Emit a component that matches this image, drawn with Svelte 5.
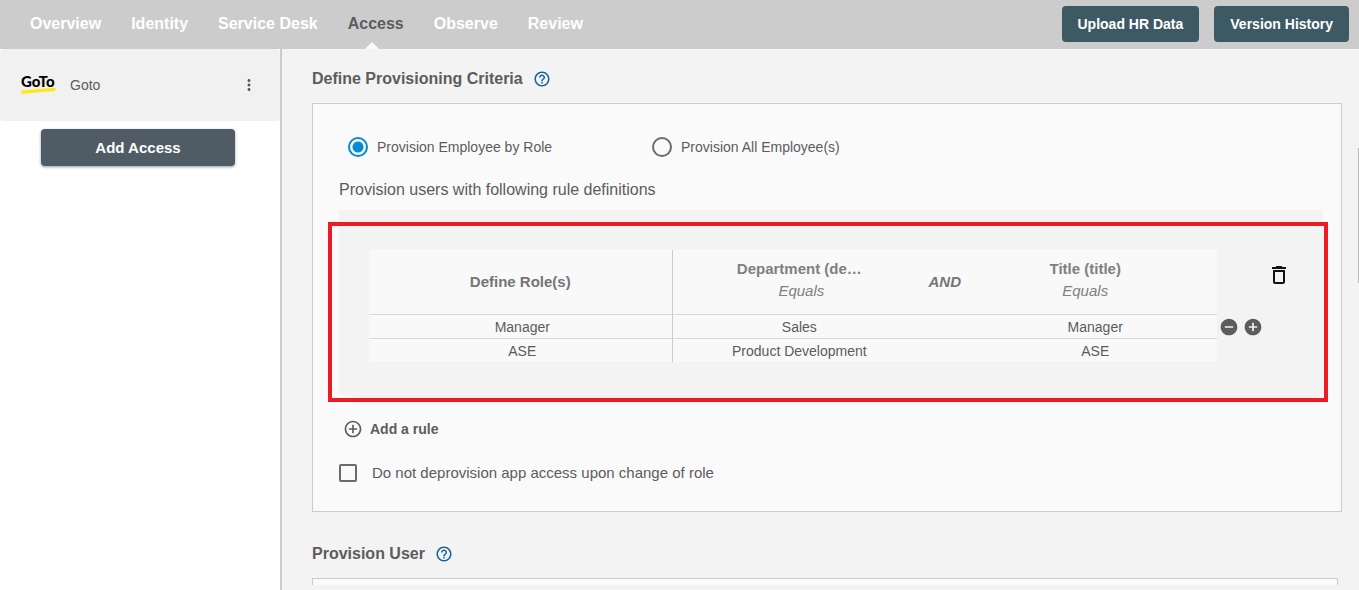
<script lang="ts">
  interface Rule {
    role: string;
    department: string;
    title: string;
  }

  const tabs = ['Overview', 'Identity', 'Service Desk', 'Access', 'Observe', 'Review'];

  let activeTab = $state('Access');
  let provisionMode = $state('role');
  let keepAccess = $state(false);

  const rules: Rule[] = [
    { role: 'Manager', department: 'Sales', title: 'Manager' },
    { role: 'ASE', department: 'Product Development', title: 'ASE' },
  ];
</script>

{#snippet helpIcon()}
  <button class="icon-btn help" aria-label="Help">
    <svg width="18" height="18" viewBox="0 0 24 24" fill="currentColor">
      <path
        d="M11 18h2v-2h-2v2zm1-16C6.48 2 2 6.48 2 12s4.48 10 10 10 10-4.48 10-10S17.52 2 12 2zm0 18c-4.41 0-8-3.59-8-8s3.59-8 8-8 8 3.59 8 8-3.59 8-8 8zm0-14c-2.21 0-4 1.79-4 4h2c0-1.1.9-2 2-2s2 .9 2 2c0 2-3 1.75-3 5h2c0-2.25 3-2.5 3-5 0-2.21-1.79-4-4-4z"
      />
    </svg>
  </button>
{/snippet}

<div class="app">
  <header>
    <nav>
      {#each tabs as tab (tab)}
        <a
          href="#{tab.toLowerCase().replace(' ', '-')}"
          class:active={tab === activeTab}
          onclick={() => (activeTab = tab)}>{tab}</a
        >
      {/each}
    </nav>
    <div class="header-actions">
      <button class="header-btn">Upload HR Data</button>
      <button class="header-btn">Version History</button>
    </div>
  </header>

  <div class="body">
    <aside>
      <div class="app-item">
        <svg class="logo" width="38" height="30" viewBox="0 0 38 30" aria-hidden="true">
          <text x="0" y="17">GoTo</text>
          <path d="M0.5 20.6 L34.5 17.8 V21 Q17 22 0.5 24 Z" fill="#ffe715" />
        </svg>
        <span class="app-name">Goto</span>
        <button class="icon-btn" aria-label="More options">
          <svg width="18" height="18" viewBox="0 0 24 24" fill="currentColor">
            <path
              d="M12 8c1.1 0 2-.9 2-2s-.9-2-2-2-2 .9-2 2 .9 2 2 2zm0 2c-1.1 0-2 .9-2 2s.9 2 2 2 2-.9 2-2-.9-2-2-2zm0 6c-1.1 0-2 .9-2 2s.9 2 2 2 2-.9 2-2-.9-2-2-2z"
            />
          </svg>
        </button>
      </div>
      <button class="add-access">Add Access</button>
    </aside>

    <main>
      <section>
        <div class="section-head">
          <h2>Define Provisioning Criteria</h2>
          {@render helpIcon()}
        </div>

        <div class="card">
          <div class="modes">
            <label>
              <input type="radio" name="mode" value="role" bind:group={provisionMode} />
              Provision Employee by Role
            </label>
            <label>
              <input type="radio" name="mode" value="all" bind:group={provisionMode} />
              Provision All Employee(s)
            </label>
          </div>

          <p class="intro">Provision users with following rule definitions</p>

          <div class="rule-panel">
            <table>
              <colgroup>
                <col class="col-role" />
                <col class="col-value" />
                <col class="col-op" />
                <col class="col-value" />
              </colgroup>
              <thead>
                <tr>
                  <th>Define Role(s)</th>
                  <th class="attr">Department (de…<em>Equals</em></th>
                  <th class="op">AND</th>
                  <th class="attr last">Title (title)<em>Equals</em></th>
                </tr>
              </thead>
              <tbody>
                {#each rules as rule}
                  <tr>
                    <td>{rule.role}</td>
                    <td>{rule.department}</td>
                    <td></td>
                    <td class="last">{rule.title}</td>
                  </tr>
                {/each}
              </tbody>
            </table>

            <div class="rule-actions">
              <button class="icon-btn delete" aria-label="Delete rule">
                <svg width="24" height="24" viewBox="0 0 24 24" fill="currentColor">
                  <path
                    d="M6 19c0 1.1.9 2 2 2h8c1.1 0 2-.9 2-2V7H6v12zM8 9h8v10H8V9zm7.5-5l-1-1h-5l-1 1H5v2h14V4z"
                  />
                </svg>
              </button>
              <div class="row-actions">
                <button class="icon-btn" aria-label="Remove row">
                  <svg width="20" height="20" viewBox="0 0 24 24" fill="currentColor">
                    <path
                      d="M12 2C6.48 2 2 6.48 2 12s4.48 10 10 10 10-4.48 10-10S17.52 2 12 2zm5 11H7v-2h10v2z"
                    />
                  </svg>
                </button>
                <button class="icon-btn" aria-label="Add row">
                  <svg width="20" height="20" viewBox="0 0 24 24" fill="currentColor">
                    <path
                      d="M12 2C6.48 2 2 6.48 2 12s4.48 10 10 10 10-4.48 10-10S17.52 2 12 2zm5 11h-4v4h-2v-4H7v-2h4V7h2v4h4v2z"
                    />
                  </svg>
                </button>
              </div>
            </div>

            <div class="highlight"></div>
          </div>

          <button class="add-rule">
            <svg width="20" height="20" viewBox="0 0 24 24" fill="currentColor">
              <path
                d="M13 7h-2v4H7v2h4v4h2v-4h4v-2h-4V7zm-1-5C6.48 2 2 6.48 2 12s4.48 10 10 10 10-4.48 10-10S17.52 2 12 2zm0 18c-4.41 0-8-3.59-8-8s3.59-8 8-8 8 3.59 8 8-3.59 8-8 8z"
              />
            </svg>
            Add a rule
          </button>

          <label class="keep">
            <input type="checkbox" bind:checked={keepAccess} />
            Do not deprovision app access upon change of role
          </label>
        </div>
      </section>

      <section>
        <div class="section-head">
          <h2>Provision User</h2>
          {@render helpIcon()}
        </div>
        <div class="card next"></div>
      </section>

      <div class="scroll-thumb"></div>
    </main>
  </div>
</div>

<style>
  :global(body) {
    margin: 0;
  }

  .app {
    height: 100vh;
    display: flex;
    flex-direction: column;
    overflow: hidden;
    background: #f3f3f3;
    color: #5c5c5c;
    font-family: 'Liberation Sans', Arial, sans-serif;
    font-size: 14px;
    line-height: 20px;
  }

  button {
    font: inherit;
    color: inherit;
    border: none;
    padding: 0;
    background: none;
    cursor: pointer;
  }

  .icon-btn {
    display: flex;
    align-items: center;
    justify-content: center;
  }

  header {
    display: flex;
    justify-content: space-between;
    flex-shrink: 0;
    padding: 0 10px 0 30px;
    height: 49px;
    background: #ccc;
  }

  nav {
    display: flex;
    gap: 30px;
  }

  nav a {
    position: relative;
    color: #fff;
    font-size: 16px;
    font-weight: bold;
    line-height: 48px;
    text-decoration: none;
  }

  nav a.active {
    color: #5c5c5c;
  }

  nav a.active::after {
    content: '';
    position: absolute;
    left: 17px;
    bottom: 0;
    border: 7px solid transparent;
    border-top: none;
    border-bottom-color: #fafafa;
  }

  .header-actions {
    display: flex;
    align-items: flex-start;
    gap: 15px;
    padding-top: 6px;
  }

  .header-btn {
    height: 36px;
    padding: 0 16px;
    border-radius: 4px;
    background: #3d5a64;
    color: #fff;
    font-weight: bold;
  }

  .body {
    display: flex;
    flex: 1;
    min-height: 0;
  }

  aside {
    display: flex;
    flex-direction: column;
    flex: 0 0 280px;
    border-right: 2px solid #ccc;
    background: #fff;
  }

  .app-item {
    display: flex;
    align-items: center;
    height: 72px;
    padding: 0 22px 0 21px;
    border-radius: 4px;
    background: #f1f1f1;
    box-sizing: border-box;
  }

  .logo text {
    font-family: Lato, sans-serif;
    font-size: 15px;
    font-weight: 900;
    fill: #000;
  }

  .app-name {
    flex: 1;
    margin-left: 11px;
  }

  .add-access {
    height: 37px;
    margin: 8px 45px 0 41px;
    border-radius: 4px;
    background: #505c65;
    box-shadow: 0 1px 3px rgba(0, 0, 0, 0.4);
    color: #fff;
    font-size: 15px;
    font-weight: bold;
  }

  main {
    position: relative;
    display: flex;
    flex-direction: column;
    gap: 32px;
    flex: 1;
    min-width: 0;
    margin-bottom: 5px;
    padding: 20px 17px 0 30px;
    overflow: hidden;
  }

  .section-head {
    display: flex;
    align-items: center;
    gap: 10px;
    height: 20px;
    margin-bottom: 14px;
  }

  h2 {
    margin: 0;
    font-size: 16px;
    font-weight: bold;
    line-height: 22px;
  }

  .help {
    color: #10659b;
  }

  .card {
    padding: 33px 19px 28px 26px;
    border: 1px solid #ccc;
    background: #fafafa;
  }

  .card.next {
    height: 200px;
    margin-right: 4px;
  }

  .modes {
    display: flex;
    padding-left: 9px;
  }

  .modes label {
    display: flex;
    align-items: center;
    gap: 9px;
    width: 304px;
  }

  input {
    appearance: none;
    flex-shrink: 0;
    margin: 0;
    border: 2px solid #6b6b6b;
    box-sizing: border-box;
  }

  input[type='radio'] {
    width: 20px;
    height: 20px;
    border-radius: 50%;
  }

  input[type='radio']:checked {
    border-color: #048bd0;
    background: radial-gradient(circle, #048bd0 5px, transparent 6px);
  }

  .intro {
    margin: 22px 0 9px;
    font-size: 16px;
    line-height: 22px;
  }

  .rule-panel {
    position: relative;
    display: flex;
    padding: 40px 0 33px 30px;
    background: #f3f3f3;
    box-shadow: 6px 12px 8px -6px rgba(0, 0, 0, 0.04);
  }

  .highlight {
    position: absolute;
    inset: 12px -6px -7px -11px;
    border: 4px solid #ed1c24;
    pointer-events: none;
  }

  table {
    flex: 1;
    min-width: 0;
    table-layout: fixed;
    border-spacing: 0;
    background: #f9f9f9;
    text-align: center;
  }

  .col-role {
    width: 35.8%;
  }

  .col-value {
    width: 29.9%;
  }

  .col-op {
    width: 4.4%;
  }

  th {
    height: 64px;
    padding: 0;
    border-bottom: 1px solid #d8d8d8;
    color: #757575;
    font-size: 15px;
    line-height: 22px;
  }

  th.attr {
    padding-bottom: 4px;
    height: 60px;
    color: #808080;
  }

  th.attr em {
    display: block;
    padding-left: 4px;
    font-weight: normal;
  }

  th.attr.last {
    padding-right: 10px;
  }

  th.attr.last em {
    padding-left: 0;
  }

  th.op {
    font-style: italic;
    white-space: nowrap;
  }

  td {
    height: 23px;
    padding: 0;
  }

  tbody tr:not(:last-child) td {
    border-bottom: 1px solid #d8d8d8;
  }

  th:first-child,
  td:first-child {
    border-right: 1px solid #ccc;
  }

  td:first-child {
    padding-left: 4px;
  }

  td.last {
    padding-left: 10px;
  }

  .rule-actions {
    display: flex;
    flex-direction: column;
    gap: 30px;
    flex: 0 0 105px;
    padding-top: 13px;
    box-sizing: border-box;
  }

  .delete {
    margin-left: 50px;
    width: 24px;
    color: #111;
  }

  .row-actions {
    display: flex;
    gap: 4px;
    padding-left: 2px;
  }

  .add-rule {
    display: flex;
    align-items: center;
    gap: 7px;
    margin: 24px 0 24px 4px;
    font-weight: bold;
  }

  .keep {
    display: flex;
    align-items: center;
    gap: 15px;
    font-size: 15px;
  }

  input[type='checkbox'] {
    width: 18px;
    height: 18px;
    border-radius: 2px;
  }

  input[type='checkbox']:checked {
    border-color: #048bd0;
    background: #048bd0;
  }

  .scroll-thumb {
    position: absolute;
    top: 99px;
    right: 0;
    width: 1px;
    height: 135px;
    background: #bbb;
  }
</style>
